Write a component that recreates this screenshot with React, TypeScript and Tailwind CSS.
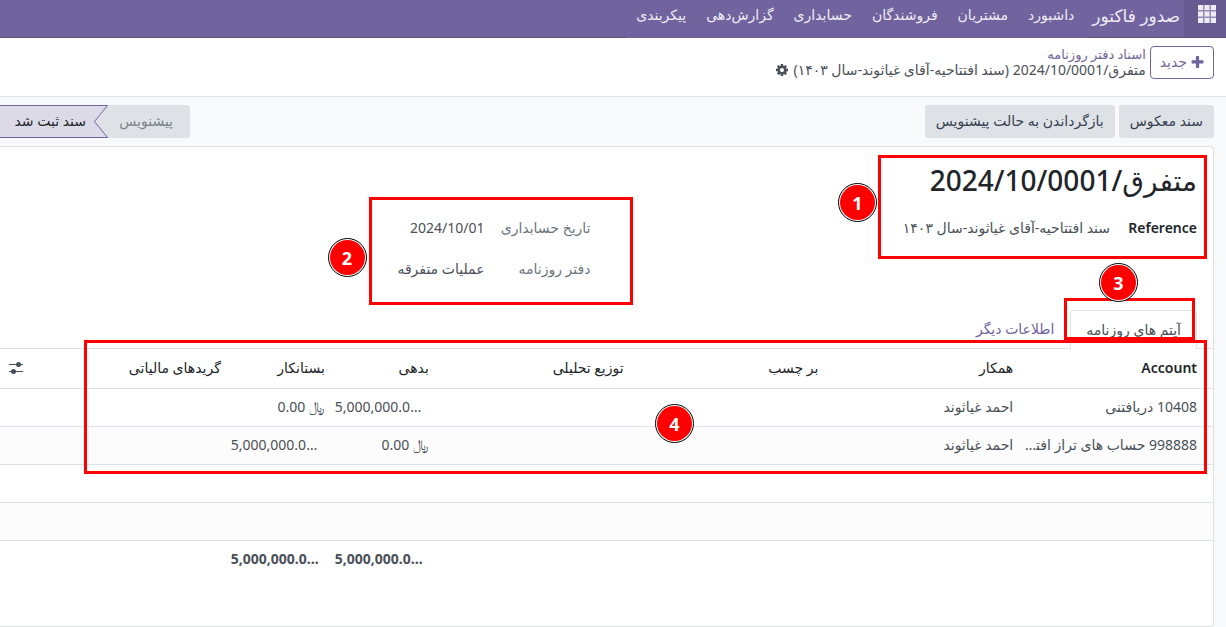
import type { ReactNode } from "react";

const menu = ["داشبورد", "مشتریان", "فروشندگان", "حسابداری", "گزارش‌دهی", "پیکربندی"];

type Line = {
  account: string;
  partner: string;
  debit: string;
  credit: string;
};

const lines: Line[] = [
  {
    account: "10408 دریافتنی",
    partner: "احمد غیاثوند",
    debit: "5,000,000.0…",
    credit: "0.00 ﷼",
  },
  {
    account: "998888 حساب های تراز افت\u200d…",
    partner: "احمد غیاثوند",
    debit: "0.00 ﷼",
    credit: "5,000,000.0…",
  },
];

const columns = [
  { title: "Account", width: "" },
  { title: "همکار", width: "" },
  { title: "بر چسب", width: "" },
  { title: "توزیع تحلیلی", width: "" },
  { title: "بدهی", width: "w-[104px]" },
  { title: "بستانکار", width: "w-[104px]" },
  { title: "گریدهای مالیاتی", width: "" },
];

function Badge({ n, className }: { n: number; className: string }) {
  return (
    <span
      className={`absolute z-20 flex size-[39px] items-center justify-center rounded-full border border-black bg-white p-px ${className}`}
    >
      <span className="flex size-full items-center justify-center rounded-full bg-[#ff0000] text-lg leading-none font-bold text-white">
        {n}
      </span>
    </span>
  );
}

function Frame({ className }: { className: string }) {
  return (
    <div className={`pointer-events-none absolute z-10 border-3 border-[#ff0000] ${className}`} />
  );
}

function PlusIcon() {
  return (
    <svg viewBox="128 128 1536 1536" className="size-[13px]" fill="currentColor" aria-hidden="true">
      <path d="M1600 736v192q0 40-28 68t-68 28h-416v416q0 40-28 68t-68 28h-192q-40 0-68-28t-28-68v-416h-416q-40 0-68-28t-28-68v-192q0-40 28-68t68-28h416v-416q0-40 28-68t68-28h192q40 0 68 28t28 68v416h416q40 0 68 28t28 68z" />
    </svg>
  );
}

function GearIcon() {
  return (
    <svg viewBox="0 0 1792 1792" className="size-[14px]" fill="currentColor" aria-hidden="true">
      <path d="M1152 896q0-106-75-181t-181-75-181 75-75 181 75 181 181 75 181-75 75-181zm512-109v222q0 12-8 23t-20 13l-185 28q-19 54-39 91 35 50 107 138 10 12 10 25t-9 23q-27 37-99 108t-94 71q-12 0-26-9l-138-108q-44 23-91 38-16 136-29 186-7 28-36 28h-222q-14 0-24.5-8.5t-11.5-21.5l-28-184q-49-16-90-37l-141 107q-10 9-25 9-14 0-25-11-126-114-165-168-7-10-7-23 0-12 8-23 15-21 51-66.5t54-70.5q-27-50-41-99l-183-27q-13-2-21-12.5t-8-23.5v-222q0-12 8-23t19-13l186-28q14-46 39-92-40-57-107-138-10-12-10-24 0-10 9-23 26-36 98.5-107.5t94.5-71.5q13 0 26 10l138 107q44-23 91-38 16-136 29-186 7-28 36-28h222q14 0 24.5 8.5t11.5 21.5l28 184q49 16 90 37l142-107q9-9 24-9 13 0 25 10 129 119 165 170 7 8 7 22 0 12-8 23-15 21-51 66.5t-54 70.5q26 50 41 98l183 28q13 2 21 12.5t8 23.5z" />
    </svg>
  );
}

function AppsIcon() {
  return (
    <svg viewBox="0 0 18 18" className="size-[18px]" fill="currentColor" aria-hidden="true">
      <path d="M0 0h18v18H0z" fillOpacity="0.35" />
      {[0, 6.5, 13].map((y) =>
        [0, 6.5, 13].map((x) => <rect key={`${x}-${y}`} x={x} y={y} width="5" height="5" />)
      )}
    </svg>
  );
}

function SlidersIcon() {
  return (
    <svg viewBox="0 0 16 14" className="h-[14px] w-4" fill="currentColor" aria-hidden="true">
      <path d="M1 3h14v1H1zM1 10h14v1H1z" />
      <circle cx="10.5" cy="3.5" r="2.5" />
      <circle cx="5.5" cy="10.5" r="2.5" />
    </svg>
  );
}

function Field({ label, children }: { label: string; children: ReactNode }) {
  return (
    <div className="grid h-7 grid-cols-[106px_1fr] items-center">
      <dt className="text-[#6c757d]">{label}</dt>
      <dd>{children}</dd>
    </div>
  );
}

function Amount({ value, bold }: { value: string; bold?: boolean }) {
  const cut = value.endsWith("…");
  return (
    <span
      dir="ltr"
      className={`block whitespace-nowrap ${cut ? "text-left" : "text-right"} ${bold ? "font-bold" : ""}`}
    >
      {value}
    </span>
  );
}

export default function App() {
  return (
    <div
      dir="rtl"
      lang="fa"
      className="overflow-x-hidden bg-[#f8f9fa] font-['Noto_Sans','DejaVu_Sans',sans-serif] text-sm leading-5 text-[#495057]"
    >
      <header className="flex h-[38px] border-b border-[#5a4f7f] bg-[#71639e] text-[#eeecf5]">
        <button aria-label="برنامه‌ها" className="flex w-[42px] bg-[#675a91] pt-[5px] pr-[10px]">
          <AppsIcon />
        </button>
        <a href="#" className="px-1 pt-1 text-[17px] leading-6">
          صدور فاکتور
        </a>
        <nav className="-mb-px flex bg-[#71639e] ps-1">
          {menu.map((m) => (
            <button key={m} className="px-[10px] pb-2">
              {m}
            </button>
          ))}
        </nav>
      </header>

      <div className="flex h-[59px] items-start gap-1 border-b border-[#dee2e6] bg-white px-3 pt-2">
        <button className="flex h-[33px] items-center gap-1 rounded border border-[#71639e] px-[9px] pb-px text-[#71639e]">
          <PlusIcon />
          جدید
        </button>
        <div className="leading-4">
          <a href="#" className="block text-[13px] text-[#71639e]">
            اسناد دفتر روزنامه
          </a>
          <div className="flex items-center gap-1">
            <span>متفرق/2024/10/0001 (سند افتتاحیه-آقای غیاثوند-سال ۱۴۰۳)</span>
            <button aria-label="تنظیمات">
              <GearIcon />
            </button>
          </div>
        </div>
      </div>

      <div className="flex items-center justify-between pt-2 pr-3 pb-2">
        <div className="flex gap-1">
          <button className="h-[33px] rounded-[3px] bg-[#dee2e6] px-[11px] pb-px text-[#374151]">سند معکوس</button>
          <button className="h-[33px] rounded-[3px] bg-[#dee2e6] px-[11px] pb-px text-[#374151]">
            بازگرداندن به حالت پیشنویس
          </button>
        </div>
        <div className="flex h-[33px]">
          <button className="w-[82px] rounded-r-[3px] bg-[#dee2e6] pr-[17px] pb-px text-right text-[#7d848b]">
            پیشنویس
          </button>
          <svg viewBox="0 0 14 33" className="h-[33px] w-[14px]" aria-hidden="true">
            <path d="M0 0h14v33H0z" fill="#dee2e6" />
            <path d="M0 .5h14L.5 16.5 14 32.5H0z" fill="#dddae7" />
            <path d="M0 .5h13.5L.5 16.5l13 16H0" fill="none" stroke="#71639e" />
          </svg>
          <button
            aria-current="step"
            className="w-[94px] border-y border-[#71639e] bg-[#dddae7] pr-2 pb-px text-right text-[#212529]"
          >
            سند ثبت شد
          </button>
        </div>
      </div>

      <main className="mr-3 rounded-r border border-l-0 border-[#dee2e6] bg-white pb-12">
        <section className="relative pt-[14px] pb-[27px]">
          <h1 className="px-4 text-[28px] leading-[38px] font-medium text-[#212529]">متفرق/2024/10/0001</h1>
          <Frame className="top-[8px] right-[6px] h-[104px] w-[329px]" />
          <Badge n={1} className="top-[36px] right-[336px]" />

          <div className="mt-[15px] grid grid-cols-2">
            <dl className="px-4">
              <div className="grid h-7 grid-cols-[87px_1fr] items-center">
                <dt className="font-semibold text-[#212529]">Reference</dt>
                <dd>سند افتتاحیه-آقای غیاثوند-سال ۱۴۰۳</dd>
              </div>
            </dl>
            <dl className="relative flex flex-col gap-[13px] px-4">
              <Field label="تاریخ حسابداری">
                <time dateTime="2024-10-01">2024/10/01</time>
              </Field>
              <Field label="دفتر روزنامه">عملیات متفرقه</Field>
              <Frame className="-top-[17px] -right-[26px] h-[108px] w-[264px]" />
              <Badge n={2} className="top-[24px] right-[240px]" />
            </dl>
          </div>
        </section>

        <div role="tablist" className="flex border-b border-[#dee2e6] px-4">
          <div className="relative -mb-px">
            <button
              role="tab"
              aria-selected="true"
              className="h-[39px] rounded-t border border-b-0 border-[#dee2e6] bg-white px-[15px] pb-px"
            >
              آیتم های روزنامه
            </button>
            <Frame className="-top-[12px] right-[2px] h-[42px] w-[131px]" />
            <Badge n={3} className="-top-[47px] right-[59px]" />
          </div>
          <button role="tab" aria-selected="false" className="h-[38px] px-4 text-[#71639e]">
            اطلاعات دیگر
          </button>
        </div>

        <div className="relative">
          <table className="w-full table-fixed border-collapse text-right [&_td]:px-[5px] [&_td:first-child]:pr-4 [&_th]:px-[5px] [&_th:first-child]:pr-4">
            <thead>
              <tr className="h-[39px] border-b border-[#dee2e6] text-[#212529]">
                {columns.map((c) => (
                  <th
                    key={c.title}
                    scope="col"
                    className={`whitespace-nowrap ${c.title === "Account" ? "font-semibold" : "font-medium"} ${c.width}`}
                  >
                    {c.title}
                  </th>
                ))}
                <th className="w-[31px]">
                  <button aria-label="ستون‌ها" className="mr-[2px] block text-[#495057]">
                    <SlidersIcon />
                  </button>
                </th>
              </tr>
            </thead>
            <tbody>
              {lines.map((l) => (
                <tr key={l.account} className="h-[38px] border-b border-[#dee2e6] even:bg-[#fcfcfc]">
                  <td className="whitespace-nowrap">{l.account}</td>
                  <td>{l.partner}</td>
                  <td />
                  <td />
                  <td>
                    <Amount value={l.debit} />
                  </td>
                  <td>
                    <Amount value={l.credit} />
                  </td>
                  <td />
                  <td />
                </tr>
              ))}
              <tr className="h-[38px] border-b border-[#dee2e6]">
                <td colSpan={8} />
              </tr>
              <tr className="h-[38px] border-b border-[#dee2e6] bg-[#fcfcfc]">
                <td colSpan={8} />
              </tr>
            </tbody>
            <tfoot>
              <tr className="h-[38px]">
                <td colSpan={4} />
                <td>
                  <Amount value="5,000,000.0…" bold />
                </td>
                <td>
                  <Amount value="5,000,000.0…" bold />
                </td>
                <td colSpan={2} />
              </tr>
            </tfoot>
          </table>
          <Frame className="-top-[9px] right-[6px] left-[84px] h-[134px]" />
          <Badge n={4} className="top-[55px] right-[519px]" />
        </div>
      </main>
    </div>
  );
}
